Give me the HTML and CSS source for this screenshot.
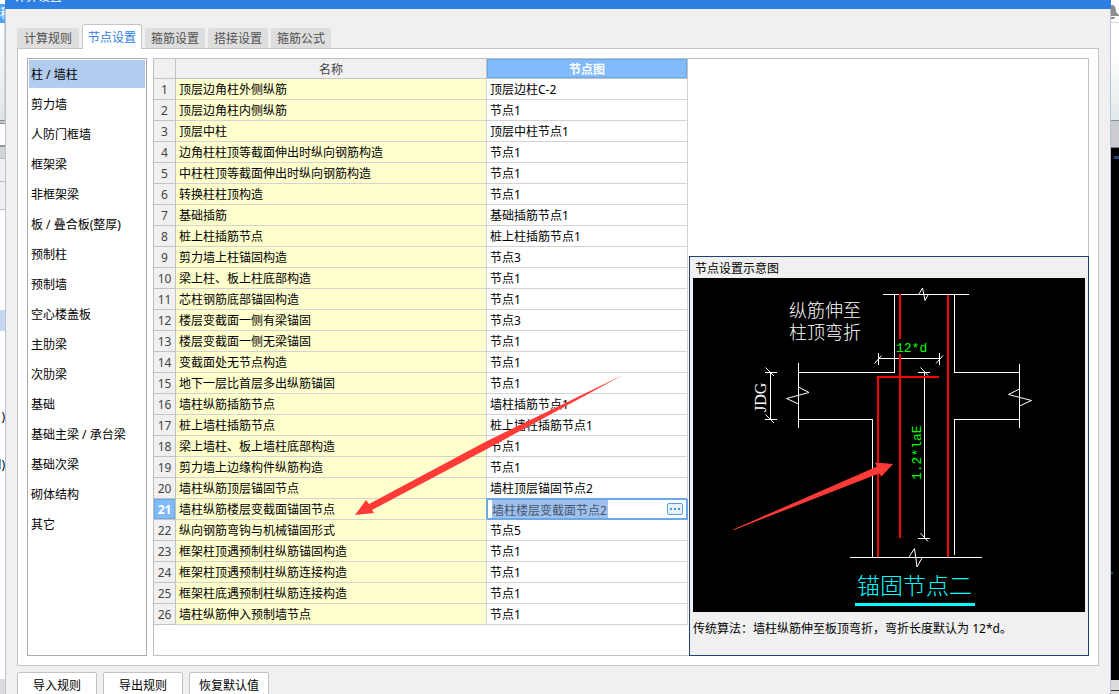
FILE: index.html
```html
<!DOCTYPE html>
<html lang="zh-CN">
<head>
<meta charset="utf-8">
<title>计算设置</title>
<link rel="stylesheet" href="styles.css">
</head>
<body>
<div class="desktop">
  <div class="behind behind-left" aria-hidden="true">
    <div class="bl-top"></div>
    <div class="bl-menu">程</div>
    <div class="bl-ribbon"></div>
    <div class="bl-edge"></div>
    <div class="bl-field"></div>
    <div class="bl-bar"></div>
    <div class="bl-row"></div>
    <div class="bl-row bl-row-tall"></div>
    <div class="bl-blank"></div>
    <div class="bl-selected"></div>
    <div class="bl-list"><span>)</span><span>l)</span></div>
    <div class="bl-status"></div>
  </div>

  <main class="dialog">
    <header class="titlebar"><span class="title-text">计算设置</span></header>
    <div class="content">
      <div class="tabs" role="tablist">
        <button class="tab first" role="tab">计算规则</button>
        <button class="tab active" role="tab" aria-selected="true">节点设置</button>
        <button class="tab" role="tab">箍筋设置</button>
        <button class="tab" role="tab">搭接设置</button>
        <button class="tab" role="tab">箍筋公式</button>
      </div>

      <section class="panel">
        <nav class="categories">
          <button class="category selected">柱 / 墙柱</button>
          <button class="category">剪力墙</button>
          <button class="category">人防门框墙</button>
          <button class="category">框架梁</button>
          <button class="category">非框架梁</button>
          <button class="category">板 / 叠合板(整厚)</button>
          <button class="category">预制柱</button>
          <button class="category">预制墙</button>
          <button class="category">空心楼盖板</button>
          <button class="category">主肋梁</button>
          <button class="category">次肋梁</button>
          <button class="category">基础</button>
          <button class="category">基础主梁 / 承台梁</button>
          <button class="category">基础次梁</button>
          <button class="category">砌体结构</button>
          <button class="category">其它</button>
        </nav>

        <div class="workspace">
          <table class="nodes">
            <colgroup><col class="col-no"><col class="col-name"><col class="col-node"></colgroup>
            <thead>
              <tr><td></td><th scope="col">名称</th><th scope="col" class="current">节点图</th></tr>
            </thead>
            <tbody>
              <tr><th scope="row">1</th><td>顶层边角柱外侧纵筋</td><td>顶层边柱C-2</td></tr>
              <tr><th scope="row">2</th><td>顶层边角柱内侧纵筋</td><td>节点1</td></tr>
              <tr><th scope="row">3</th><td>顶层中柱</td><td>顶层中柱节点1</td></tr>
              <tr><th scope="row">4</th><td>边角柱柱顶等截面伸出时纵向钢筋构造</td><td>节点1</td></tr>
              <tr><th scope="row">5</th><td>中柱柱顶等截面伸出时纵向钢筋构造</td><td>节点1</td></tr>
              <tr><th scope="row">6</th><td>转换柱柱顶构造</td><td>节点1</td></tr>
              <tr><th scope="row">7</th><td>基础插筋</td><td>基础插筋节点1</td></tr>
              <tr><th scope="row">8</th><td>桩上柱插筋节点</td><td>桩上柱插筋节点1</td></tr>
              <tr><th scope="row">9</th><td>剪力墙上柱锚固构造</td><td>节点3</td></tr>
              <tr><th scope="row">10</th><td>梁上柱、板上柱底部构造</td><td>节点1</td></tr>
              <tr><th scope="row">11</th><td>芯柱钢筋底部锚固构造</td><td>节点1</td></tr>
              <tr><th scope="row">12</th><td>楼层变截面一侧有梁锚固</td><td>节点3</td></tr>
              <tr><th scope="row">13</th><td>楼层变截面一侧无梁锚固</td><td>节点1</td></tr>
              <tr><th scope="row">14</th><td>变截面处无节点构造</td><td>节点1</td></tr>
              <tr><th scope="row">15</th><td>地下一层比首层多出纵筋锚固</td><td>节点1</td></tr>
              <tr><th scope="row">16</th><td>墙柱纵筋插筋节点</td><td>墙柱插筋节点1</td></tr>
              <tr><th scope="row">17</th><td>桩上墙柱插筋节点</td><td>桩上墙柱插筋节点1</td></tr>
              <tr><th scope="row">18</th><td>梁上墙柱、板上墙柱底部构造</td><td>节点1</td></tr>
              <tr><th scope="row">19</th><td>剪力墙上边缘构件纵筋构造</td><td>节点1</td></tr>
              <tr><th scope="row">20</th><td>墙柱纵筋顶层锚固节点</td><td>墙柱顶层锚固节点2</td></tr>
              <tr><th scope="row" class="current">21</th><td>墙柱纵筋楼层变截面锚固节点</td><td class="editing"><div class="editor"><input class="node-input" type="text" aria-label="节点图" value="墙柱楼层变截面节点2"><button class="more" aria-label="选择节点"><svg viewBox="0 0 14 10" class="dots"><path d="M2 4h2v2H2zM6 4h2v2H6zM10 4h2v2h-2z"/></svg></button></div></td></tr>
              <tr><th scope="row">22</th><td>纵向钢筋弯钩与机械锚固形式</td><td>节点5</td></tr>
              <tr><th scope="row">23</th><td>框架柱顶遇预制柱纵筋锚固构造</td><td>节点1</td></tr>
              <tr><th scope="row">24</th><td>框架柱顶遇预制柱纵筋连接构造</td><td>节点1</td></tr>
              <tr><th scope="row">25</th><td>框架柱底遇预制柱纵筋连接构造</td><td>节点1</td></tr>
              <tr><th scope="row">26</th><td>墙柱纵筋伸入预制墙节点</td><td>节点1</td></tr>
            </tbody>
          </table>

          <aside class="preview">
            <h2 class="preview-title">节点设置示意图</h2>
            <svg class="diagram" viewBox="693 278 392 334" role="img" aria-label="锚固节点二">
              <rect x="693" y="278" width="392" height="334"/>
              <g class="outline">
                <path d="M883 294.5H969M894.500 294V372.500H798M954.500 294V372.500H1019M798 419.500H872.500V557M1019 419.500H954.500V555M850 557.500H982M798.500 363V428M1019.500 364V428"/>
                <path d="M770.500 372V419M765 372.500H777M765 419.500H777M924.500 372V538M918 372.500H930M918 538.500H930M878 358.500H940M878.500 353V365M939.500 353V365"/>
              </g>
              <g class="slant">
                <path d="M919 294L922.500 288L925 300.500L928 295M909 557L914.500 548.500L917 567L922 558M798.500 387L809 392.500L786.500 398.500L798.500 404M1019.500 389L1008.500 394.500L1031.500 400.500L1019.500 406"/>
                <path d="M765.500 367.500L774 376M765.500 414.500L774 423M920.500 367.500L928 375.500M920.500 533L928 541.500M874.500 363.500L881.500 355.500M936 363.500L943 355.500"/>
              </g>
              <path class="rebar" d="M900 294V339M900 354V538M948 295V557M939 377H878V557"/>
              <text class="note" x="789" y="317">纵筋伸至</text>
              <text class="note" x="789" y="339">柱顶弯折</text>
              <text class="dim" x="896" y="352">12*d</text>
              <text class="dim" transform="translate(921 480) rotate(-90)">1.2*laE</text>
              <text class="beam" transform="translate(766 412) rotate(-90)">JDG</text>
              <text class="name" x="857" y="594">锚固节点二</text>
              <rect class="underline" x="855" y="603" width="120" height="3"/>
              <path class="arrow" d="M733 529.500L877 466.500L875 462.500L893 464L881.500 476.500L879 473.500L734 530Z"/>
            </svg>
            <p class="preview-note">传统算法<span class="mid">：</span>墙柱纵筋伸至板顶弯折<span class="mid">，</span>弯折长度默认为 12*d。</p>
          </aside>

          <svg class="pointer" viewBox="0 0 270 142" aria-hidden="true">
            <path class="arrow" d="M268 1L132 67L14 130L11 126L0 141L19 139L17 136L132 75Z"/>
          </svg>
        </div>
      </section>

      <footer class="actions">
        <button class="action">导入规则</button>
        <button class="action">导出规则</button>
        <button class="action">恢复默认值</button>
      </footer>
    </div>
  </main>

  <div class="behind behind-right" aria-hidden="true">
    <div class="br-top"><svg class="bell" viewBox="0 0 8 15"><path d="M0 0h2q3 1 3 7l3 3v1H0zM0 12h4v1H3v1H0z"/></svg></div>
    <div class="br-ribbon"></div>
    <div class="br-bar"></div>
    <div class="br-canvas"><i></i><i></i></div>
    <div class="br-status"></div>
  </div>
</div>
</body>
</html>
```
FILE: styles.css
```css
* {
  box-sizing: border-box;
}

body {
  margin: 0;
  overflow: hidden;
  background: #fff;
  color: #000;
  font: 12px/20px "Noto Sans", "Noto Sans CJK SC", sans-serif;
}

button,
input {
  margin: 0;
  padding: 0;
  border: 0;
  background: none;
  color: inherit;
  font: inherit;
}

.desktop {
  display: grid;
  grid-template-columns: 5px minmax(0, 1fr) 8px;
  height: 100vh;
}

/* Application window behind the dialog */
.behind {
  display: flex;
  flex-direction: column;
  overflow: hidden;
}

.bl-top {
  height: 4px;
}

.bl-menu {
  height: 19px;
  background: #4fa6f8;
  color: #fff;
}

.bl-ribbon {
  height: 97px;
  border-right: 1px solid #cfd2d4;
  background: linear-gradient(#fff, #dfe5e6);
}

.bl-edge {
  height: 4px;
  border-top: 1px solid #88888f;
  border-bottom: 1px solid #88888f;
  background: #ccc;
}

.bl-field {
  height: 21px;
}

.bl-bar {
  height: 14px;
  border-top: 2px solid #96969c;
  border-bottom: 1px solid #bbb;
  background: #cfd2d9;
}

.bl-row {
  height: 23px;
  border-bottom: 1px solid #c0c0c0;
  background: #f0f0f0;
}

.bl-row-tall {
  height: 28px;
}

.bl-blank {
  height: 100px;
}

.bl-selected {
  height: 21px;
  background: #c6d7f0;
}

.bl-list {
  display: flex;
  flex: 1;
  flex-direction: column;
  align-items: flex-end;
  gap: 28px;
  padding-top: 76px;
}

.bl-status {
  height: 15px;
  background: #dcdcde;
}

.br-top {
  height: 23px;
  padding-top: 5px;
  border-bottom: 1px solid #d4d4d6;
}

.bell {
  display: block;
  height: 15px;
  fill: #8c8c8c;
}

.br-ribbon {
  height: 98px;
  border-bottom: 1px solid #8c8e96;
  background: linear-gradient(#fff 30%, #e2e9ea);
}

.br-bar {
  height: 27px;
  border-bottom: 1px solid #7c7c80;
  background: #cbccd2;
}

.br-canvas {
  display: flex;
  flex: 1;
  flex-direction: column;
  justify-content: space-between;
  padding: 8px 0 106px;
  background: #000;
}

.br-canvas i {
  width: 5px;
  height: 3px;
  align-self: flex-end;
  background: #1f4a7c;
}

.br-canvas i + i {
  width: 2px;
  height: 2px;
  align-self: flex-start;
}

.br-status {
  height: 14px;
  background: linear-gradient(#dcdcde 10px, #333 10px, #333 11px, #dcdcde 11px);
}

/* Dialog frame */
.dialog {
  display: flex;
  flex-direction: column;
  min-width: 0;
  min-height: 0;
}

.titlebar {
  display: flex;
  align-items: flex-end;
  height: 9px;
  padding: 0 9px 7px;
  background: #2d80e2;
  color: #fff;
}

.title-text {
  line-height: 10px;
}

.content {
  display: flex;
  flex: 1;
  flex-direction: column;
  min-height: 0;
  padding: 15px 11px 0;
  border: solid #b9c5d3;
  border-width: 0 1px;
  background: #f0f0f0;
}

.tabs {
  display: flex;
  align-items: flex-end;
  gap: 3px;
  height: 24px;
}

.tab {
  height: 20px;
  padding: 2px 6px 0;
  border-radius: 3px 3px 0 0;
  background: #dedede;
  color: #505050;
  line-height: 18px;
  white-space: nowrap;
}

.tab.first {
  padding: 2px 7px 0;
}

.tab.active {
  z-index: 1;
  height: 25px;
  margin-bottom: -1px;
  padding: 2px 5px 0;
  border: 1px solid #c3c5c9;
  border-bottom: 0;
  background: #fff;
  color: #2d80e2;
}

.panel {
  display: flex;
  flex: 1;
  gap: 6px;
  min-height: 0;
  padding: 9px;
  border: 1px solid #c3c5c9;
  background: #fff;
}

.categories {
  display: flex;
  flex: 0 0 120px;
  flex-direction: column;
  gap: 2px;
  padding: 1px;
  border: 1px solid #ababab;
}

.category {
  height: 28px;
  padding: 2px 2px 0;
  text-align: left;
  white-space: nowrap;
}

.category.selected {
  background: #b1ccee;
}

.workspace {
  position: relative;
  display: grid;
  flex: 1;
  grid-template-columns: 534px minmax(0, 1fr);
  gap: 1px;
  min-width: 0;
  border: 1px solid #c0c0c0;
}

/* Node table */
.nodes {
  align-self: start;
  width: 100%;
  border-collapse: separate;
  border-spacing: 0;
  table-layout: fixed;
}

.col-no {
  width: 22px;
}

.col-node {
  width: 201px;
}

.nodes th,
.nodes td {
  height: 21px;
  padding: 2px 3px 0;
  border: solid #d3d3d3;
  border-width: 0 1px 1px 0;
  line-height: 18px;
  text-align: left;
  white-space: nowrap;
}

.nodes th {
  border-color: #c3c3c3;
  background: #f0f0f0;
  color: #444;
  font-weight: 400;
  text-align: center;
}

.nodes tbody th {
  padding: 2px 0 0;
}

.nodes thead th,
.nodes thead td {
  height: 20px;
  border-color: #c3c3c3;
  background: #f0f0f0;
  line-height: 17px;
}

.nodes tbody td:nth-child(2) {
  background: #ffffce;
}

.nodes thead .current,
.nodes tbody .current {
  background: #82bbfb;
  box-shadow: inset 0 0 0 1px #69a9ec;
  color: #fff;
  font-weight: 700;
}

.nodes .editing {
  padding: 0;
  border-color: #6aa8ea;
  box-shadow: inset 0 0 0 1px #6aa8ea, -1px -1px 0 #6aa8ea;
}

.editor {
  display: flex;
  align-items: center;
  justify-content: space-between;
  height: 20px;
  padding: 0 4px 0 5px;
}

.node-input {
  width: 116px;
  height: 18px;
  padding-top: 2px;
  background: #a0c1ec;
  color: #46566e;
  line-height: 16px;
}

.more {
  width: 16px;
  height: 12px;
  border: 1px solid #5b9fdf;
  border-radius: 2px;
  background: #e8f2fc;
}

.dots {
  display: block;
  width: 100%;
  fill: #4c94da;
}

/* Node preview */
.preview {
  align-self: end;
  margin: 0 -1px -1px 0;
  padding: 0 3px;
  border: 1px solid #1f3f77;
  background: #f0f0f0;
}

.preview-title {
  margin: 0;
  padding: 3px 2px 0;
  font-size: 12px;
  font-weight: 400;
  line-height: 18px;
}

.diagram {
  display: block;
  width: 100%;
}

.preview-note {
  height: 43px;
  margin: 0;
  padding-top: 6px;
  white-space: nowrap;
}

.mid {
  font-family: "Noto Sans CJK TC", sans-serif;
}

.outline,
.slant {
  fill: none;
  stroke: #fff;
}

.outline,
.rebar {
  shape-rendering: crispEdges;
}

.rebar {
  fill: none;
  stroke: #f00;
  stroke-width: 2;
}

.note {
  fill: #fff;
  font: 300 18px "Liberation Sans", "Noto Sans CJK SC", sans-serif;
}

.dim {
  fill: #0f0;
  font: 13px "Liberation Mono", monospace;
}

.beam {
  fill: #fff;
  font: 16px "Liberation Serif", serif;
}

.name {
  fill: #0ff;
  font: 300 23px "Noto Sans CJK SC", sans-serif;
}

.underline {
  fill: #0ff;
}

.arrow {
  fill: #ff3a37;
}

/* Annotation arrow lies over the table */
.pointer {
  position: absolute;
  top: 315px;
  left: 201px;
  width: 270px;
  pointer-events: none;
}

.actions {
  display: flex;
  gap: 6px;
  height: 28px;
  padding-top: 6px;
}

.action {
  width: 80px;
  height: 26px;
  padding-top: 2px;
  border: 1px solid #c3c3c3;
  border-radius: 2px;
  background: #fff;
}
```
